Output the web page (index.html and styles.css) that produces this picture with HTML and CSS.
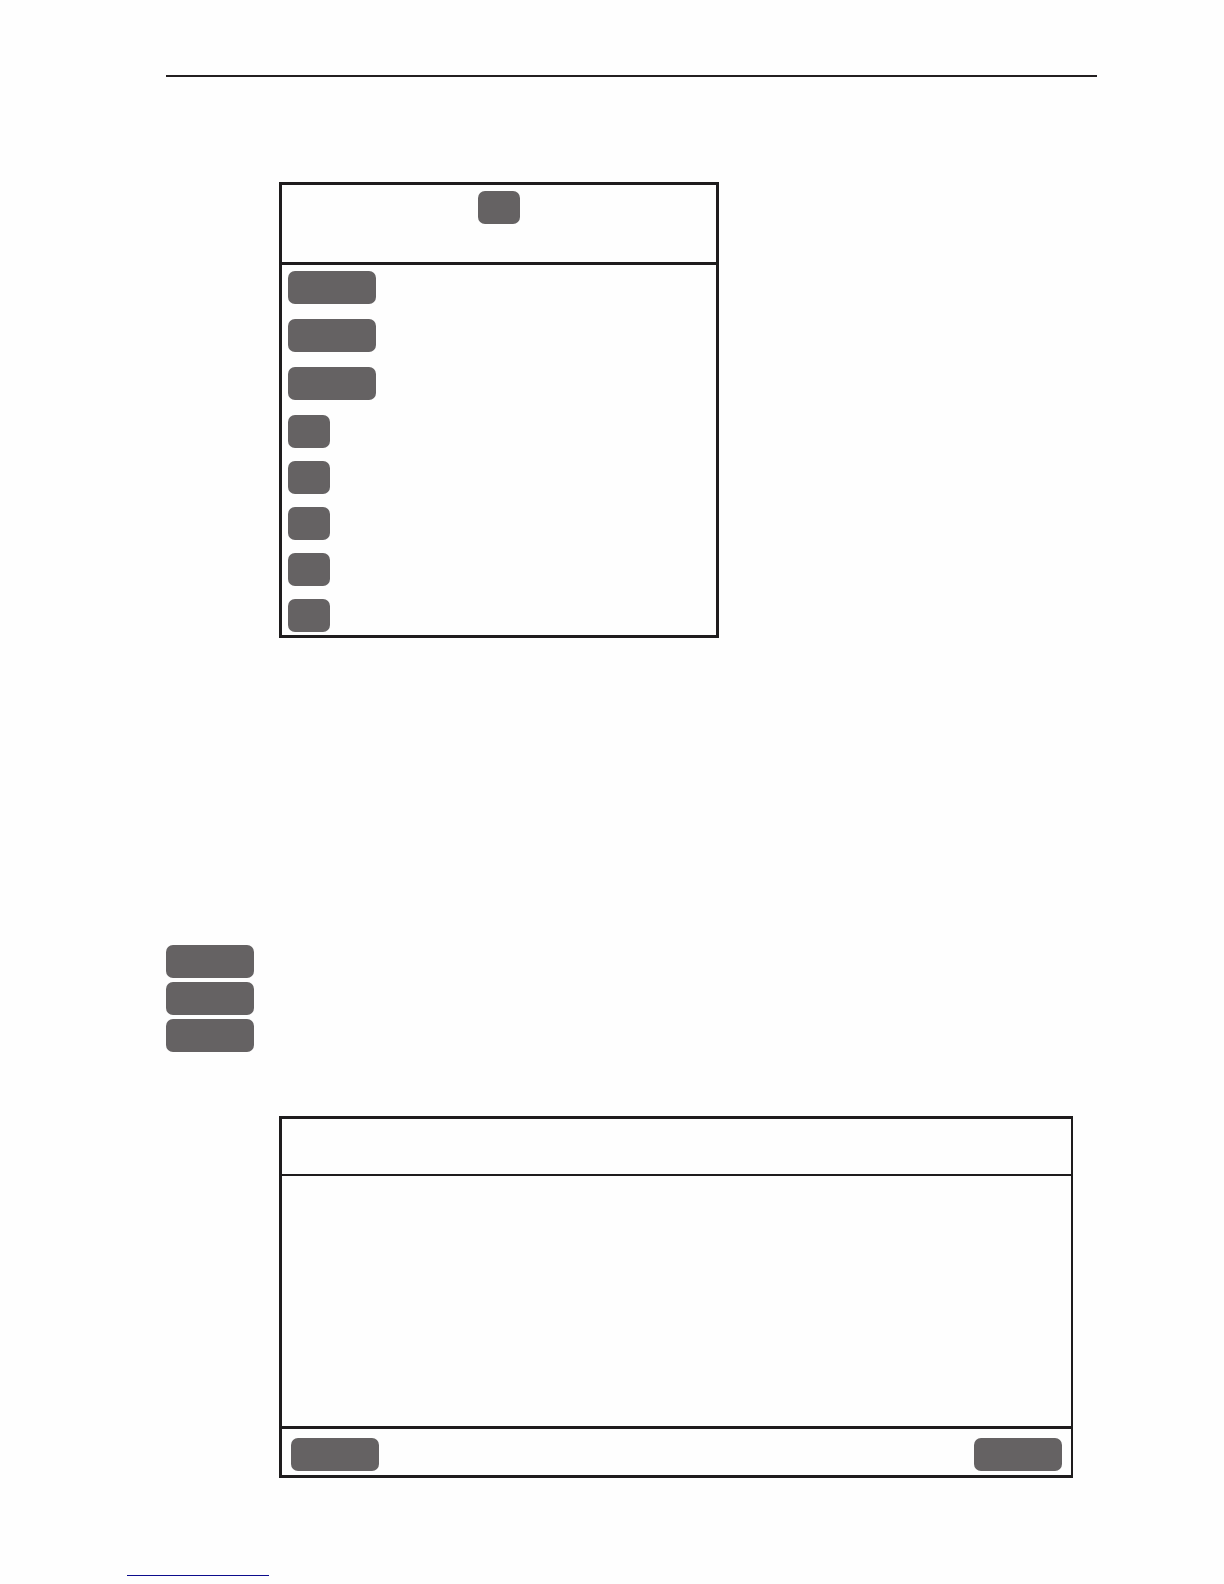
FILE: index.html
```html
<!DOCTYPE html>
<html lang="en">
<head>
    <meta charset="UTF-8">
    <meta name="viewport" content="width=device-width, initial-scale=1">
    <title>Keys</title>
    <link rel="stylesheet" href="styles.css">
</head>
<body>
<div id="page">
    <main>
        <hr class="page-rule">

        <section class="panel panel-menu">
            <header class="menu-title">
                <button type="button" class="key key-small"></button>
            </header>
            <div class="menu-keys">
                <div class="menu-keys-wide">
                    <button type="button" class="key"></button>
                    <button type="button" class="key"></button>
                    <button type="button" class="key"></button>
                </div>
                <div class="menu-keys-small">
                    <button type="button" class="key key-small"></button>
                    <button type="button" class="key key-small"></button>
                    <button type="button" class="key key-small"></button>
                    <button type="button" class="key key-small"></button>
                    <button type="button" class="key key-small"></button>
                </div>
            </div>
        </section>

        <section class="side-keys">
            <button type="button" class="key"></button>
            <button type="button" class="key"></button>
            <button type="button" class="key"></button>
        </section>

        <section class="panel panel-dialog">
            <header class="dialog-title"></header>
            <div class="dialog-body"></div>
            <footer class="dialog-keys">
                <button type="button" class="key"></button>
                <button type="button" class="key"></button>
            </footer>
        </section>
    </main>
    <footer>
        <a class="page-link" href="#"></a>
    </footer>
</div>
</body>
</html>
```
FILE: styles.css
```css
* {
    box-sizing: border-box;
}

body {
    margin: 0;
    background-color: #fefefe;
    font-family: "Liberation Sans", sans-serif;
}

#page {
    padding: 75px 127px 8px;
}

main {
    margin-left: 39px;
}

.page-rule {
    height: 2px;
    margin: 0 0 105px;
    border: 0;
    background-color: #231f20;
}

/* Keys */
.key {
    display: block;
    width: 88px;
    height: 33px;
    padding: 0;
    border: 0;
    border-radius: 7px;
    background-color: #656263;
    cursor: pointer;
}

.key-small {
    width: 42px;
}

/* Panels */
.panel {
    margin-left: 113px;
    border: 3px solid #1e1c1d;
}

.panel-menu {
    max-width: 440px;
}

.menu-title {
    display: flex;
    justify-content: center;
    height: 80px;
    padding-top: 6px;
    border-bottom: 3px solid #1e1c1d;
}

.menu-keys {
    display: grid;
    gap: 15px;
    padding: 6px 6px 3px;
}

.menu-keys-wide {
    display: grid;
    gap: 15px;
}

.menu-keys-small {
    display: grid;
    gap: 13px;
}

.side-keys {
    display: grid;
    gap: 4px;
    margin: 307px 0 64px;
}

.panel-dialog {
    margin-right: 24px;
    border-right-width: 2px;
}

.dialog-title {
    height: 57px;
    border-bottom: 2px solid #1e1c1d;
}

.dialog-body {
    height: 250px;
}

.dialog-keys {
    display: flex;
    justify-content: space-between;
    padding: 9px 9px 4px;
    border-top: 3px solid #1e1c1d;
}

.page-link {
    display: block;
    width: 142px;
    margin-top: 97px;
    border-bottom: 1px solid #0c0c8c;
}
```
